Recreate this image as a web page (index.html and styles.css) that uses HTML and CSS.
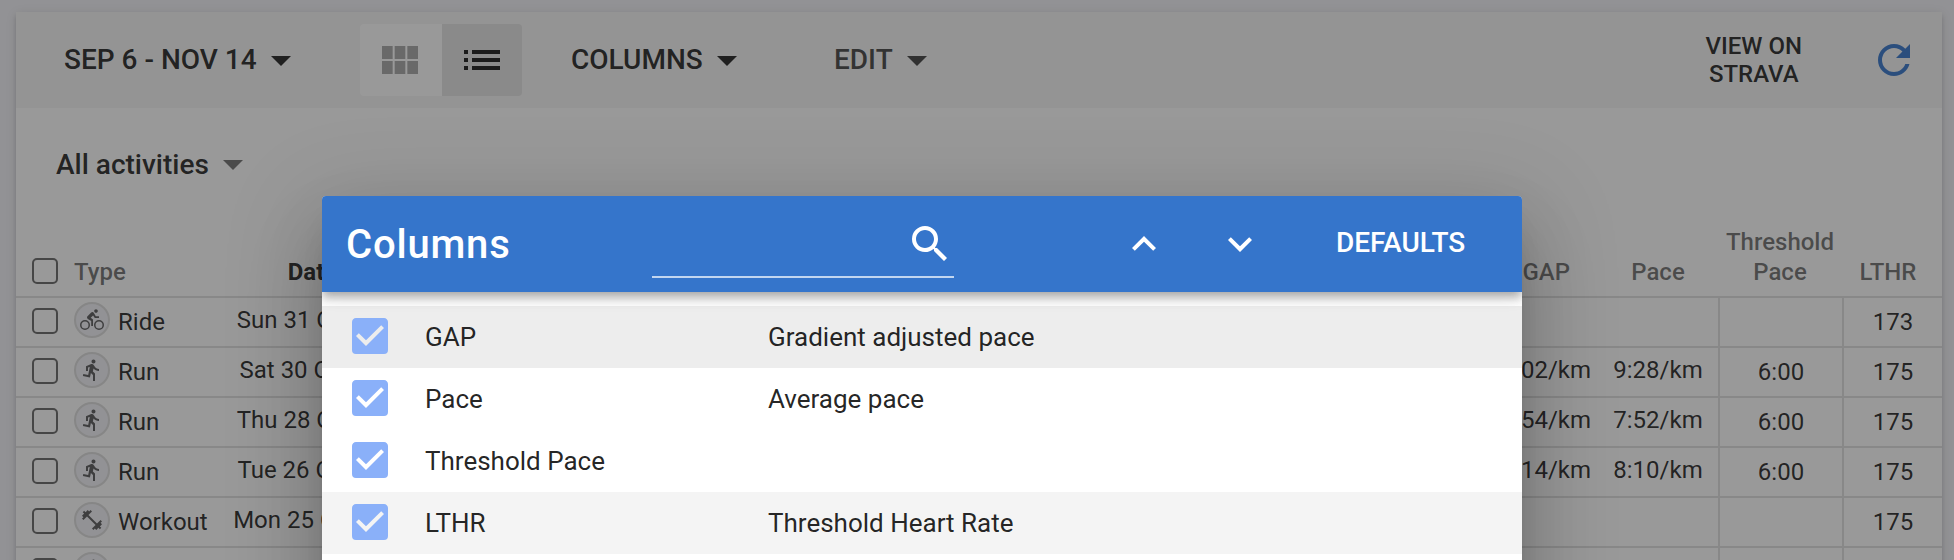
FILE: index.html
```html
<!DOCTYPE html>
<html lang="en">
<head>
<meta charset="utf-8">
<title>Activities</title>
<link rel="stylesheet" href="styles.css">
</head>
<body>
<svg class="defs" aria-hidden="true">
  <symbol id="down" viewBox="0 0 24 24"><path d="M7,10L12,15L17,10H7Z"/></symbol>
  <symbol id="run" viewBox="0 0 24 24"><path d="M13.5,5.5C14.59,5.5 15.5,4.58 15.5,3.5C15.5,2.38 14.59,1.5 13.5,1.5C12.39,1.5 11.5,2.38 11.5,3.5C11.5,4.58 12.39,5.5 13.5,5.5M9.89,19.38L10.89,15L13,17V23H15V15.5L12.89,13.5L13.5,10.5C14.79,12 16.79,13 19,13V11C17.09,11 15.5,10 14.69,8.58L13.69,7C13.29,6.38 12.69,6 12,6C11.69,6 11.5,6.08 11.19,6.08L6,8.28V13H8V9.58L9.79,8.88L8.19,17L3.29,16L2.89,18L9.89,19.38Z"/></symbol>
  <symbol id="bike" viewBox="0 0 24 24"><path d="M5,20.5A3.5,3.5 0 0,1 1.5,17A3.5,3.5 0 0,1 5,13.5A3.5,3.5 0 0,1 8.5,17A3.5,3.5 0 0,1 5,20.5M5,12A5,5 0 0,0 0,17A5,5 0 0,0 5,22A5,5 0 0,0 10,17A5,5 0 0,0 5,12M14.8,10H19V8.2H15.8L13.86,4.93C13.57,4.43 13,4.1 12.4,4.1C11.93,4.1 11.5,4.29 11.2,4.6L7.5,8.29C7.19,8.6 7,9 7,9.5C7,10.13 7.33,10.66 7.85,10.97L11.2,13V18H13V11.5L10.75,9.85L13.07,7.5M19,20.5A3.5,3.5 0 0,1 15.5,17A3.5,3.5 0 0,1 19,13.5A3.5,3.5 0 0,1 22.5,17A3.5,3.5 0 0,1 19,20.5M19,12A5,5 0 0,0 14,17A5,5 0 0,0 19,22A5,5 0 0,0 24,17A5,5 0 0,0 19,12M16,4.8C17,4.8 17.8,4 17.8,3C17.8,2 17,1.2 16,1.2C15,1.2 14.2,2 14.2,3C14.2,4 15,4.8 16,4.8Z"/></symbol>
  <symbol id="dumbbell" viewBox="0 0 24 24"><path d="M20.57,14.86L22,13.43L20.57,12L17,15.57L8.43,7L12,3.43L10.57,2L9.14,3.43L7.71,2L5.57,4.14L4.14,2.71L2.71,4.14L4.14,5.57L2,7.71L3.43,9.14L2,10.57L3.43,12L7,8.43L15.57,17L12,20.57L13.43,22L14.86,20.57L16.29,22L18.43,19.86L19.86,21.29L21.29,19.86L19.86,18.43L22,16.29L20.57,14.86Z"/></symbol>
  <symbol id="checked" viewBox="0 0 24 24"><path d="M10,17L5,12L6.41,10.58L10,14.17L17.59,6.58L19,8M19,3H5C3.89,3 3,3.89 3,5V19A2,2 0 0,0 5,21H19A2,2 0 0,0 21,19V5C21,3.89 20.1,3 19,3Z"/></symbol>
</svg>

<main class="card">
  <header class="toolbar">
    <button class="btn btn-range"><span>SEP 6 - NOV 14</span><svg class="icon"><use href="#down"/></svg></button>
    <div class="toggle">
      <button class="toggle-item"><svg class="icon" viewBox="0 0 24 24"><path d="M14.67 5v6.5H9.33V5h5.34m1 6.5H21V5h-5.33v6.5m-1 7.5v-6.5H9.33V19h5.34m1-6.5V19H21v-6.5h-5.33m-7.34 0H3V19h5.33v-6.5m0-1V5H3v6.5h5.33z"/></svg></button>
      <button class="toggle-item active"><svg class="icon" viewBox="0 0 24 24"><path d="M3 13h2v-2H3v2zm0 4h2v-2H3v2zm0-8h2V7H3v2zm4 4h14v-2H7v2zm0 4h14v-2H7v2zM7 7v2h14V7H7z"/></svg></button>
    </div>
    <button class="btn btn-columns"><span>COLUMNS</span><svg class="icon"><use href="#down"/></svg></button>
    <button class="btn btn-edit"><span>EDIT</span><svg class="icon"><use href="#down"/></svg></button>
    <button class="btn btn-strava"><span>VIEW ON<br>STRAVA</span></button>
    <button class="btn btn-refresh"><svg class="icon" viewBox="0 0 24 24"><path d="M17.65,6.35C16.2,4.9 14.21,4 12,4A8,8 0 0,0 4,12A8,8 0 0,0 12,20C15.73,20 18.84,17.45 19.73,14H17.65C16.83,16.33 14.61,18 12,18A6,6 0 0,1 6,12A6,6 0 0,1 12,6C13.66,6 15.14,6.69 16.22,7.78L13,11H20V4L17.65,6.35Z"/></svg></button>
  </header>

  <div class="filter"><span>All activities</span><svg class="icon"><use href="#down"/></svg></div>

  <section class="table">
    <div class="row head">
      <div class="cell check"><i class="box"></i></div>
      <div class="cell type">Type</div>
      <div class="cell date sorted">Date</div>
      <div class="cell gap">GAP</div>
      <div class="cell pace">Pace</div>
      <div class="cell threshold">Threshold<br>Pace</div>
      <div class="cell lthr">LTHR</div>
    </div>
    <div class="row">
      <div class="cell check"><i class="box"></i></div>
      <div class="cell type"><i class="badge"><svg><use href="#bike"/></svg></i>Ride</div>
      <div class="cell date">Sun 31 Oct</div>
      <div class="cell gap"></div><div class="cell pace"></div>
      <div class="cell threshold"></div><div class="cell lthr">173</div>
    </div>
    <div class="row">
      <div class="cell check"><i class="box"></i></div>
      <div class="cell type"><i class="badge"><svg><use href="#run"/></svg></i>Run</div>
      <div class="cell date">Sat 30 Oct</div>
      <div class="cell gap">02/km</div><div class="cell pace">9:28/km</div>
      <div class="cell threshold">6:00</div><div class="cell lthr">175</div>
    </div>
    <div class="row">
      <div class="cell check"><i class="box"></i></div>
      <div class="cell type"><i class="badge"><svg><use href="#run"/></svg></i>Run</div>
      <div class="cell date">Thu 28 Oct</div>
      <div class="cell gap">54/km</div><div class="cell pace">7:52/km</div>
      <div class="cell threshold">6:00</div><div class="cell lthr">175</div>
    </div>
    <div class="row">
      <div class="cell check"><i class="box"></i></div>
      <div class="cell type"><i class="badge"><svg><use href="#run"/></svg></i>Run</div>
      <div class="cell date">Tue 26 Oct</div>
      <div class="cell gap">14/km</div><div class="cell pace">8:10/km</div>
      <div class="cell threshold">6:00</div><div class="cell lthr">175</div>
    </div>
    <div class="row">
      <div class="cell check"><i class="box"></i></div>
      <div class="cell type"><i class="badge"><svg><use href="#dumbbell"/></svg></i>Workout</div>
      <div class="cell date">Mon 25 Oct</div>
      <div class="cell gap"></div><div class="cell pace"></div>
      <div class="cell threshold"></div><div class="cell lthr">175</div>
    </div>
    <div class="row">
      <div class="cell check"><i class="box"></i></div>
      <div class="cell type"><i class="badge"><svg><use href="#run"/></svg></i></div>
      <div class="cell date"></div>
      <div class="cell gap"></div><div class="cell pace"></div>
      <div class="cell threshold"></div><div class="cell lthr"></div>
    </div>
  </section>
</main>

<div class="overlay"></div>

<section class="dialog">
  <header class="dialog-bar">
    <h1 class="dialog-title">Columns</h1>
    <div class="search"><svg class="icon" viewBox="0 0 24 24"><path d="M9.5,3A6.5,6.5 0 0,1 16,9.5C16,11.11 15.41,12.59 14.44,13.73L14.71,14H15.5L20.5,19L19,20.5L14,15.5V14.71L13.73,14.44C12.59,15.41 11.11,16 9.5,16A6.5,6.5 0 0,1 3,9.5A6.5,6.5 0 0,1 9.5,3M9.5,5C7,5 5,7 5,9.5C5,12 7,14 9.5,14C12,14 14,12 14,9.5C14,7 12,5 9.5,5Z"/></svg></div>
    <div class="moves">
      <svg class="icon" viewBox="0 0 24 24"><path d="M7.41,15.41L12,10.83L16.59,15.41L18,14L12,8L6,14L7.41,15.41Z"/></svg>
      <svg class="icon" viewBox="0 0 24 24"><path d="M7.41,8.58L12,13.17L16.59,8.58L18,10L12,16L6,10L7.41,8.58Z"/></svg>
    </div>
    <button class="btn btn-defaults"><span>DEFAULTS</span></button>
  </header>
  <ul class="list">
    <li class="item selected"><svg class="icon"><use href="#checked"/></svg><span class="name">GAP</span><span>Gradient adjusted pace</span></li>
    <li class="item"><svg class="icon"><use href="#checked"/></svg><span class="name">Pace</span><span>Average pace</span></li>
    <li class="item"><svg class="icon"><use href="#checked"/></svg><span class="name">Threshold Pace</span></li>
    <li class="item hovered"><svg class="icon"><use href="#checked"/></svg><span class="name">LTHR</span><span>Threshold Heart Rate</span></li>
  </ul>
</section>
</body>
</html>
```
FILE: styles.css
```css
* { box-sizing: border-box; }

html { height: 560px; overflow: hidden; }

body {
  margin: 0;
  height: 560px;
  padding: 12px 12px 0 16px;
  overflow: hidden;
  position: relative;
  background: #f2f2f7;
  color: rgba(0, 0, 0, .87);
  font-family: Roboto, "Liberation Sans", sans-serif;
  font-size: 24px;
}

.defs { display: none; }

.icon {
  width: 48px;
  height: 48px;
  flex: none;
  fill: currentColor;
}

.card {
  height: 640px;
  background: #fff;
  box-shadow: 0 6px 2px -4px rgba(0, 0, 0, .2), 0 4px 4px 0 rgba(0, 0, 0, .14), 0 2px 10px 0 rgba(0, 0, 0, .12);
}

.toolbar {
  display: flex;
  align-items: center;
  height: 96px;
  background: #f5f5f5;
}

.btn {
  display: flex;
  align-items: center;
  justify-content: space-between;
  flex: none;
  border: 0;
  padding: 0;
  background: none;
  color: inherit;
  font: 500 28px/28px Roboto, "Liberation Sans", sans-serif;
  white-space: nowrap;
}

.btn-range { width: 241px; margin-left: 48px; }
.btn-columns { width: 180px; margin-left: 49px; }
.btn-edit { width: 106px; margin-left: 83px; color: rgba(0, 0, 0, .74); }
.btn-strava { margin-left: auto; font-size: 24px; text-align: center; }
.btn-refresh { margin: 0 24px 0 68px; color: #3575cb; }

.toggle {
  display: flex;
  width: 162px;
  height: 72px;
  margin-left: 55px;
  border-radius: 4px;
  overflow: hidden;
}

.toggle-item {
  width: 80px;
  display: flex;
  align-items: center;
  justify-content: center;
  padding: 0;
  border: 0;
  background: #fff;
  color: rgba(0, 0, 0, .35);
}

.toggle-item:first-child { width: 82px; padding-right: 2px; }
.toggle-item.active { background: #e3e3e3; color: rgba(0, 0, 0, .9); }

.filter {
  display: flex;
  align-items: center;
  justify-content: space-between;
  width: 201px;
  height: 48px;
  margin: 32px 0 0 40px;
  font-size: 28px;
  font-weight: 500;
}

.filter .icon { color: rgba(0, 0, 0, .56); }

.table { padding-top: 24px; }

.row {
  display: grid;
  grid-template-columns: 58px 136px 170px 1fr 120px 124px 100px;
  height: 50px;
  border-bottom: 2px solid rgba(0, 0, 0, .12);
}

.head {
  height: 86px;
  color: rgba(0, 0, 0, .57);
  font-weight: 500;
  line-height: 30px;
}

.cell {
  display: flex;
  align-items: center;
  justify-content: center;
  white-space: nowrap;
}

.head .cell { align-items: flex-end; padding-bottom: 9px; text-align: center; }
.head .date { padding-left: 35px; }
.head .sorted { color: rgba(0, 0, 0, .87); font-weight: 700; }
.check, .type { justify-content: flex-start; }
.check { padding: 0 0 2px 16px; }
.date { padding-bottom: 4px; }
.gap { justify-content: flex-end; padding: 0 7px 4px 0; }
.head .gap { padding-right: 28px; }
.pace { padding-bottom: 4px; }
.row:not(.head) .threshold, .row:not(.head) .lthr { border-left: 2px solid rgba(0, 0, 0, .12); }
.head .lthr { padding-right: 8px; }
.head .check { padding-bottom: 12px; }

.box {
  width: 26px;
  height: 26px;
  border: 2px solid rgba(0, 0, 0, .6);
  border-radius: 5px;
}

.badge {
  display: flex;
  align-items: center;
  justify-content: center;
  width: 36px;
  height: 36px;
  margin: -4px 8px 0 0;
  border: 2px solid #dcdcdc;
  border-radius: 50%;
  background: #f2f2f7;
}

.badge svg { width: 24px; height: 24px; fill: rgba(0, 0, 0, .64); }

.overlay {
  position: absolute;
  inset: 0;
  background: #212121;
  opacity: .46;
}

.dialog {
  position: absolute;
  left: 322px;
  top: 196px;
  width: 1200px;
  height: 800px;
  border-radius: 4px;
  background: #fff;
  box-shadow: 0 22px 30px -14px rgba(0, 0, 0, .2), 0 48px 76px 6px rgba(0, 0, 0, .14), 0 18px 92px 16px rgba(0, 0, 0, .12);
}

.dialog-bar {
  position: relative;
  display: flex;
  align-items: center;
  height: 96px;
  padding-left: 24px;
  border-radius: 4px 4px 0 0;
  background: #3575cb;
  color: #fff;
  box-shadow: 0 4px 8px -2px rgba(0, 0, 0, .2), 0 8px 10px 0 rgba(0, 0, 0, .14), 0 2px 20px 0 rgba(0, 0, 0, .12);
  clip-path: inset(0 0 -30px 0);
}

.dialog-title {
  width: 306px;
  margin: 0;
  font-size: 40px;
  font-weight: 500;
  letter-spacing: .8px;
}

.search {
  display: flex;
  justify-content: flex-end;
  width: 302px;
  height: 68px;
  padding-top: 10px;
  border-bottom: 2px solid rgba(255, 255, 255, .7);
}

.moves { display: flex; gap: 48px; margin-left: 166px; }
.btn-defaults { margin: -3px 0 0 72px; }

.list { margin: 0; padding: 14px 0 0; list-style: none; }

.item {
  display: flex;
  align-items: center;
  height: 62px;
  padding: 0 0 0 24px;
  font-size: 26px;
}

.item .icon { margin-top: -2px; color: #8ab0f9; }
.item .name { width: 343px; margin-left: 31px; }
.selected { background: #ededed; }
.hovered { background: #f4f4f4; }
```
